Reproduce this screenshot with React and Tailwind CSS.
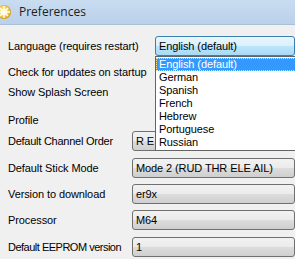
import React from "react";

const comboBg =
  "bg-[linear-gradient(to_bottom,#f2f2f2_0%,#ebebeb_50%,#dddddd_50%,#cfcfcf_100%)]";

function Combo({ text, className = "" }) {
  return (
    <div
      className={`h-[20px] w-[180px] flex items-center pl-[3px] border border-[#707070] rounded-[3px] ${comboBg} ${className}`}
    >
      <span>{text}</span>
    </div>
  );
}

function Row({ label, mt, labelClass = "", children }) {
  return (
    <div className={`flex items-center h-[20px] ${mt}`}>
      <div className={`w-[132px] pl-[8px] shrink-0 whitespace-nowrap ${labelClass}`}>{label}</div>
      {children}
    </div>
  );
}

export default function App() {
  const items = ["English (default)", "German", "Spanish", "French", "Hebrew", "Portuguese", "Russian"];
  return (
    <div
      className="relative w-[295px] h-[259px] overflow-hidden bg-[#f0f0f0] text-[11px] tracking-[-0.1px] text-black"
      style={{ fontFamily: '"Liberation Sans", Arial, sans-serif' }}
    >
      {/* Title bar */}
      <div className="h-[25px] flex items-center bg-[linear-gradient(to_bottom,#c9dcf0,#bad1ea)] border-b border-[#a9bfd6]">
        <svg width="14" height="16" viewBox="0 0 14 16" className="shrink-0 ml-[-2px]">
          <defs>
            <radialGradient id="g" cx="0.45" cy="0.45" r="0.6">
              <stop offset="0" stopColor="#fff6c8" />
              <stop offset="0.6" stopColor="#f5cf45" />
              <stop offset="1" stopColor="#c98a12" />
            </radialGradient>
          </defs>
          <circle cx="6" cy="8" r="7" fill="url(#g)" />
          <circle cx="6" cy="8" r="3" fill="#fffbe8" />
          <g stroke="#fffbe8" strokeWidth="1.6">
            <line x1="6" y1="2" x2="6" y2="14" />
            <line x1="0" y1="8" x2="12" y2="8" />
            <line x1="2" y1="4" x2="10" y2="12" />
            <line x1="10" y1="4" x2="2" y2="12" />
          </g>
        </svg>
        <span
          className="ml-[7px] text-[12px] tracking-normal text-[#1e1e1e]"
          style={{ fontFamily: '"Open Sans", "Noto Sans", sans-serif' }}
        >
          Preferences
        </span>
      </div>

      <div className="flex flex-col">
        <div className="flex items-center h-[20px] mt-[11px]">
          <div className="w-[155px] pl-[8px] shrink-0 whitespace-nowrap">Language (requires restart)</div>
          <div className="h-[20px] w-[160px] flex items-center pl-[3px] border border-[#3c7fb1] rounded-[3px] bg-[linear-gradient(to_bottom,#eaf6fd_0%,#d9f0fc_50%,#bee6fd_50%,#a7d9f5_100%)]">
            English (default)
          </div>
        </div>
        <Row label="Check for updates on startup" mt="mt-[6px]" />
        <Row label="Show Splash Screen" mt="mt-0" />
        <Row label="Profile" mt="mt-[8px]" />
        <Row label="Default Channel Order" mt="mt-[1px]" labelClass="tracking-[-0.25px]">
          <Combo text="R E T A" />
        </Row>
        <Row label="Default Stick Mode" mt="mt-[7px]">
          <Combo text="Mode 2 (RUD THR ELE AIL)" />
        </Row>
        <Row label="Version to download" mt="mt-[6px]">
          <Combo text="er9x" />
        </Row>
        <Row label="Processor" mt="mt-[6px]">
          <Combo text="M64" />
        </Row>
        <Row label="Default EEPROM version" mt="mt-[7px]" labelClass="tracking-[-0.5px]">
          <Combo text="1" />
        </Row>
      </div>

      {/* Dropdown popup */}
      <div className="absolute left-[155px] top-[56px] w-[150px] h-[95px] bg-white border border-[#646464] pt-[1px]">
        {items.map((t, i) => (
          <div
            key={t}
            className={
              i === 0
                ? "h-[13px] leading-[13px] pl-[3px] bg-[#3399ff] text-white outline-1 outline-dotted outline-[#ffe08a] -outline-offset-1"
                : "h-[13px] leading-[13px] pl-[3px]"
            }
          >
            {t}
          </div>
        ))}
      </div>
    </div>
  );
}
